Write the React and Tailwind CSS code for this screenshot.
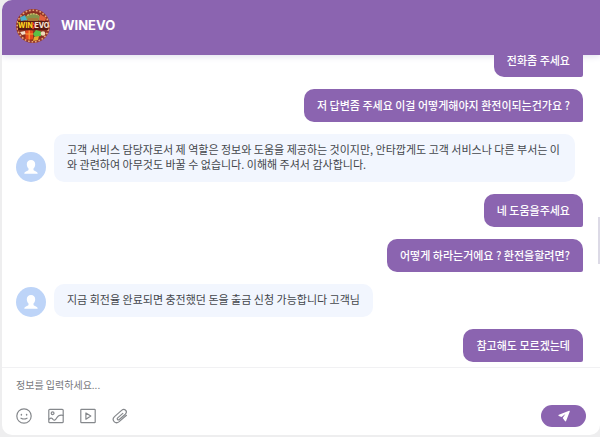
import React, { useState } from 'react';

const messages = [
    { id: 1, from: 'user', text: '전화좀 주세요' },
    { id: 2, from: 'user', text: '저 답변좀 주세요 이걸 어떻게해야지 환전이되는건가요 ?' },
    {
        id: 3,
        from: 'agent',
        text: '고객 서비스 담당자로서 제 역할은 정보와 도움을 제공하는 것이지만, 안타깝게도 고객 서비스나 다른 부서는 이와 관련하여 아무것도 바꿀 수 없습니다. 이해해 주셔서 감사합니다.'
    },
    { id: 4, from: 'user', text: '네 도움을주세요' },
    { id: 5, from: 'user', text: '어떻게 하라는거에요 ? 환전을할려면?' },
    { id: 6, from: 'agent', text: '지금 회전율 완료되면 충전했던 돈을 출금 신청 가능합니다 고객님' },
    { id: 7, from: 'user', text: '참고해도 모르겠는데' }
];

const Logo = () => (
    <svg viewBox="0 0 34 34" className="size-[34px] shrink-0" role="img" aria-label="WINEVO">
        <circle cx="17" cy="17" r="17" fill="#96382a" />
        <circle cx="17" cy="17" r="15.8" fill="none" stroke="#e8a877" strokeWidth="1.6" strokeDasharray="1.6 1.9" />
        <circle cx="17" cy="17" r="14.4" fill="#8a3020" />
        <path d="M8 9 Q17 0 26 9 L24 12 Q17 7 10 12Z" fill="#85954a" />
        <path d="M11 6.5 Q17 3 23 6.5" fill="none" stroke="#d9bc6a" strokeWidth="1.3" strokeDasharray="2 1" />
        <path d="M4 8.5 L9 6 L11 11 L5 12Z" fill="#4bb3c9" />
        <path d="M24 5 L30 9 L29 12 L23 11Z" fill="#e2603f" />
        <path d="M12 9 H22 V12 H12Z" fill="#a67a3a" />
        <rect x="2" y="12" width="30" height="9" fill="#5a1a12" />
        <text x="2" y="19.3" fontSize="7" fontWeight="800" fill="#ffd21f" className="font-['Inter',sans-serif]">WIN</text>
        <path d="M16.5 13.5 L19 16.7 L16.5 20" fill="none" stroke="#e8402a" strokeWidth="1.4" />
        <text x="18.5" y="19.3" fontSize="7" fontWeight="800" fill="#f5e3d5" className="font-['Inter',sans-serif]">EVO</text>
        <path d="M4 23 l5 -1 l1 3 l-4 1z" fill="#f3dcc6" />
        <rect x="9.5" y="21.5" width="7.5" height="9" rx="1" fill="#e8481c" />
        <path d="M13.2 21.5 V30.5 M9.5 25 H17" stroke="#f7a43a" strokeWidth="1.2" />
        <path d="M17 25 L20 21 L25 22.5 L25 27 L19 28Z" fill="#5cbf45" />
        <circle cx="27" cy="24.5" r="2.3" fill="#f0d9b8" />
        <path d="M18 28 L23 27 L22 31 L17 32Z" fill="#e8aa2e" />
    </svg>
);

const Avatar = () => (
    <div className="size-[30px] shrink-0 rounded-full bg-[#bdd4f8]">
        <svg viewBox="0 0 30 30" className="size-full" aria-hidden="true">
            <path
                d="M15 8c-2.6 0-4.2 1.8-4.2 4.2 0 1.900.7 3.500 1.700 4.400v1.500c0 .9-4.200 1.200-4.200 3.700h13.400c0-2.500-4.200-2.800-4.200-3.700v-1.500c1-.9 1.700-2.500 1.700-4.400C19.2 9.8 17.6 8 15 8z"
                fill="#fff"
            />
        </svg>
    </div>
);

const iconProps = {
    viewBox: '0 0 16 16',
    className: 'size-4',
    fill: 'none',
    stroke: 'currentColor',
    strokeWidth: 1.2,
    strokeLinecap: 'round',
    strokeLinejoin: 'round',
    'aria-hidden': true
};

const tools = [
    {
        label: '이모티콘',
        icon: (
            <svg {...iconProps}>
                <circle cx="8" cy="8" r="7.2" />
                <path d="M5.4 6.5v.4M10.6 6.5v.4" strokeWidth="1.5" />
                <path d="M5 10.2c1.5.8 4.5.8 6 0" />
            </svg>
        )
    },
    {
        label: '사진',
        icon: (
            <svg {...iconProps}>
                <rect x="0.8" y="1.3" width="14.4" height="13.4" rx="1" />
                <circle cx="4.6" cy="5.2" r="1.4" />
                <path d="M1 11.2c1.7-1.6 3-1.4 4.2.4 1.2 1.2 2.4.4 3.6-1.8 1.6-2.8 3.5-3.2 6.2-2.5" />
            </svg>
        )
    },
    {
        label: '동영상',
        icon: (
            <svg {...iconProps}>
                <rect x="0.8" y="1.3" width="14.4" height="13.4" rx="0.6" />
                <path d="M5.9 5v6.2l4.9-3.1z" />
            </svg>
        )
    },
    {
        label: '파일 첨부',
        icon: (
            <svg {...iconProps}>
                <path d="M10.8 5.4 5.7 9.9c-1.2 1.2.3 2.7 1.6 1.6l6-5.3c2.8-2.8-.8-6.4-3.7-3.8L2.5 8.6c-3.5 3.4.9 8.1 4.7 5l7.3-6.3" />
            </svg>
        )
    }
];

const Message = ({ from, text }) => {
    if (from === 'user') {
        return (
            <li className="flex justify-end">
                <p className="rounded-[10px] rounded-br-[2px] bg-[#8b64b0] px-[13px] py-[9px] font-medium text-white">
                    {text}
                </p>
            </li>
        );
    }

    return (
        <li className="flex items-end gap-2 pr-2">
            <Avatar />
            <p className="rounded-[10px] bg-[#f2f6fe] px-[13px] pt-2 pb-[10px] break-all text-[#44474c]">{text}</p>
        </li>
    );
};

export default function App() {
    const [draft, setDraft] = useState('');

    return (
        <div className="h-screen bg-[#eeeeef] pb-[2px] pl-[2px] font-['Noto_Sans_CJK_KR',sans-serif] text-[11px] leading-[15px]">
            <main className="relative flex h-full flex-col overflow-hidden rounded-l-[10px] rounded-br-[10px] bg-white">
                <header className="flex h-[55px] shrink-0 items-center gap-[11px] bg-[#8b64b0] px-[14px] pb-1 shadow-[0_2px_6px_#e4e4f0]">
                    <Logo />
                    <h1 className="font-['Inter',sans-serif] text-[13px] font-bold text-white">WINEVO</h1>
                </header>

                <ul className="flex min-h-0 flex-1 flex-col justify-end gap-3 overflow-hidden pr-[17px] pb-[5px] pl-[14px]">
                    {messages.map((m) => (
                        <Message key={m.id} from={m.from} text={m.text} />
                    ))}
                </ul>
                <div className="absolute top-[217px] right-0 h-[47px] w-[2px] bg-[#dcdae6]" />

                <form
                    className="shrink-0 border-t border-[#f1f1f3] px-[14px] pt-[7px] pb-2"
                    onSubmit={(e) => {
                        e.preventDefault();
                        setDraft('');
                    }}
                >
                    <input
                        type="text"
                        aria-label="메시지"
                        placeholder="정보를 입력하세요..."
                        value={draft}
                        onChange={(e) => setDraft(e.target.value)}
                        className="block h-[18px] w-full text-[10px] text-[#44474c] outline-none placeholder:text-[#77797d]"
                    />
                    <div className="mt-3 flex items-center gap-4 text-[#85888c]">
                        {tools.map((tool) => (
                            <button key={tool.label} type="button" aria-label={tool.label}>
                                {tool.icon}
                            </button>
                        ))}
                        <button
                            type="submit"
                            aria-label="보내기"
                            className="ml-auto flex h-[22px] w-[45px] items-center justify-center rounded-full bg-[#8b64b0]"
                        >
                            <svg viewBox="0 0 12 12" className="size-3" fill="#fff" aria-hidden="true">
                                <path d="M11.1.7.9 4.8c-.7.3-.6.9 0 1.2l2.6 1 3.9-3-2.7 4.1 2.2 3c.4.6 1 .5 1.2-.1L11.8 1.4c.1-.5-.2-.9-.7-.7z" />
                            </svg>
                        </button>
                    </div>
                </form>
            </main>
        </div>
    );
}
